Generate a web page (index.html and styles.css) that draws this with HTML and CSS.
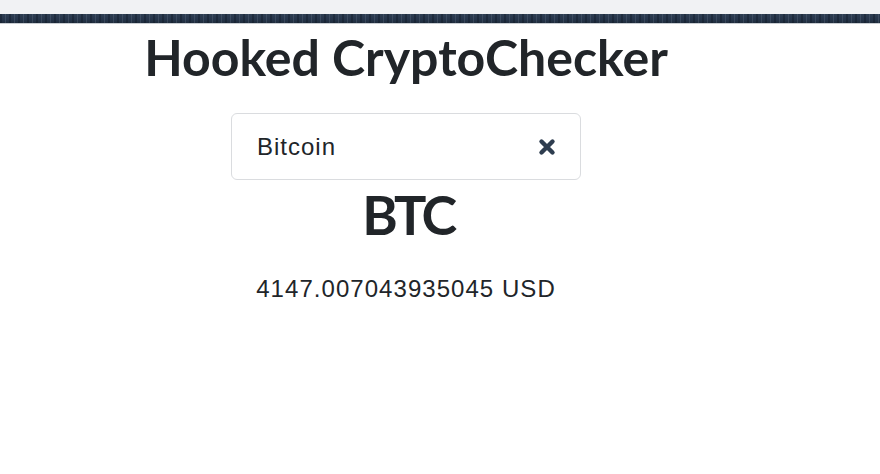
FILE: index.html
```html
<!DOCTYPE html>
<html lang="en">
<head>
<meta charset="utf-8">
<title>Hooked CryptoChecker</title>
<link rel="stylesheet" href="styles.css">
</head>
<body>
<div class="topbar"><div class="topbar-light"></div><div class="topbar-dark"></div></div>
<main class="app">
  <h1 class="title">Hooked CryptoChecker</h1>
  <div class="search">
    <span class="search-value">Bitcoin</span>
    <svg class="clear" viewBox="0 0 18 18" width="18" height="18" aria-hidden="true">
      <path d="M3.5 3.5 L14.5 14.5 M14.5 3.5 L3.5 14.5" stroke="#2e3d4f" stroke-width="4.4" stroke-linecap="round" fill="none"/>
    </svg>
  </div>
  <h2 class="symbol">BTC</h2>
  <p class="price">4147.007043935045 USD</p>
</main>
</body>
</html>
```
FILE: styles.css
```css
html, body {
  margin: 0;
  padding: 0;
  background: #ffffff;
}
body {
  width: 880px;
  height: 474px;
  overflow: hidden;
  color: #212529;
  font-family: "Liberation Sans", Arial, sans-serif;
}
.topbar {
  display: flex;
  flex-direction: column;
}
.topbar-light {
  height: 14px;
  background: #f1f2f4;
}
.topbar-dark {
  height: 9px;
  background:
    repeating-linear-gradient(90deg, rgba(10,18,30,0.35) 0 2px, rgba(0,0,0,0) 2px 5px, rgba(120,135,155,0.25) 5px 6px, rgba(0,0,0,0) 6px 9px),
    linear-gradient(180deg, #2e3e52 0%, #26354a 60%, #1f2c3d 100%);
  border-bottom: 1px solid #c9cdd2;
}
.app {
  width: 812px;
  display: flex;
  flex-direction: column;
  align-items: center;
}
.title {
  margin: 3px 0 0;
  font-family: Lato, "Noto Sans", sans-serif;
  font-weight: 700;
  font-size: 50px;
  line-height: 60px;
  color: #212529;
}
.search {
  margin-top: 26px;
  box-sizing: border-box;
  width: 350px;
  height: 67px;
  border: 1px solid #dadcdf;
  border-radius: 6px;
  display: flex;
  align-items: center;
  justify-content: space-between;
  padding: 0 24px 0 25px;
}
.search-value {
  font-size: 24px;
  letter-spacing: 1px;
  color: #212529;
}
.clear {
  display: block;
}
.symbol {
  margin: 3px 0 0;
  padding-left: 4px;
  font-family: Lato, "Noto Sans", sans-serif;
  font-weight: 700;
  font-size: 54px;
  line-height: 1.2;
  letter-spacing: -3.5px;
  color: #212529;
}
.price {
  margin: 27px 0 0;
  font-size: 24px;
  line-height: 28px;
  letter-spacing: 1.05px;
  color: #212529;
}
```
